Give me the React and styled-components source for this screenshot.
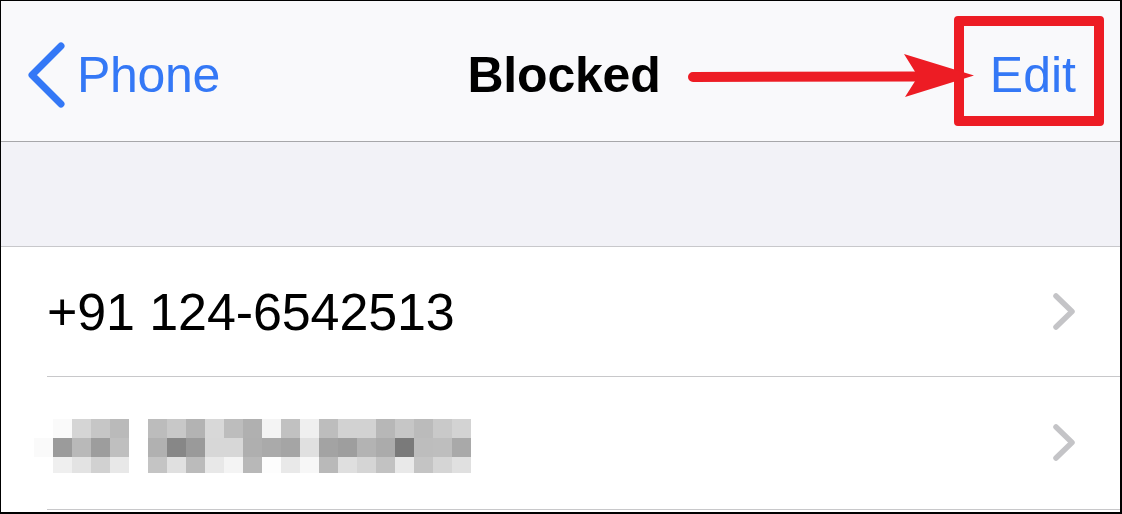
import React from "react";
import styled, { createGlobalStyle } from "styled-components";

const GlobalStyle = createGlobalStyle`
  * { box-sizing: border-box; }
  html, body { margin: 0; padding: 0; background: #ffffff; }
  body { font-family: "Liberation Sans", Arial, sans-serif; }
`;

const Frame = styled.div`
  width: 1122px;
  height: 514px;
  border-style: solid;
  border-color: #000;
  border-width: 1px 2px 2px 1px;
  background: #ffffff;
  overflow: hidden;
  display: flex;
  flex-direction: column;
`;

const NavBar = styled.header`
  position: relative;
  flex: none;
  height: 141px;
  padding-top: 7px;
  background: #f9f9fb;
  border-bottom: 1px solid #a7a7aa;
  display: grid;
  grid-template-columns: 1fr auto 1fr;
  align-items: center;
`;

const BackButton = styled.div`
  display: flex;
  align-items: center;
  gap: 11px;
  margin-left: 25px;
  color: #3478f6;
  font-size: 50px;
  letter-spacing: -0.3px;
`;

const Title = styled.h1`
  margin: 0 0 0 7px;
  font-size: 50px;
  font-weight: 700;
  letter-spacing: -0.2px;
  color: #000;
`;

const EditSlot = styled.div`
  justify-self: end;
  margin-right: 44px;
`;

const EditLabel = styled.span`
  position: relative;
  display: inline-block;
  color: #3478f6;
  font-size: 50px;

  &::after {
    content: "";
    position: absolute;
    top: -30px;
    left: -36px;
    right: -28px;
    bottom: -22px;
    border: 10px solid #ed1c24;
    border-radius: 4px;
  }
`;

const ArrowOverlay = styled.svg`
  position: absolute;
  left: 679px;
  top: 44px;
`;

const GroupGap = styled.div`
  flex: none;
  height: 105px;
  background: #f2f2f7;
  border-bottom: 1px solid #c8c8cb;
`;

const Cell = styled.div`
  flex: none;
  padding-left: 46px;
  background: #fff;
`;

const CellBody = styled.div`
  height: ${(p) => p.$h}px;
  border-bottom: 1px solid #c8c8ca;
  display: flex;
  align-items: center;
  justify-content: space-between;
  padding-right: 43px;
`;

const Number = styled.span`
  font-size: 52px;
  letter-spacing: -0.1px;
  color: #000;
`;

const Pixelated = styled.div`
  margin-left: -13px;
  margin-top: 6px;
  display: grid;
  grid-template-columns: repeat(23, 19px);
  grid-template-rows: 19px 19px 16px;
`;

const Pixel = styled.div`
  background: ${(p) => p.$c};
`;

const BackChevron = () => (
  <svg width="40" height="66" viewBox="0 0 40 66" aria-hidden="true">
    <path
      d="M35 4 L6 33 L35 62"
      fill="none"
      stroke="#3478f6"
      strokeWidth="7"
      strokeLinecap="round"
      strokeLinejoin="round"
    />
  </svg>
);

const Disclosure = () => (
  <svg width="26" height="42" viewBox="0 0 26 42" aria-hidden="true">
    <path
      d="M5 5 L21 20.5 L5 36"
      fill="none"
      stroke="#c4c4c7"
      strokeWidth="5.5"
      strokeLinecap="round"
      strokeLinejoin="round"
    />
  </svg>
);

const W = "#ffffff";
const pixelRows = [
  [W, "#fafafa", "#d5d5d5", "#c6c6c6", "#bababa", W,
    "#bcbcbc", "#c8c8c8", "#b3b3b3", "#d8d8d8", "#bdbdbd", "#b0b0b0", "#f4f4f4", "#c1c1c1", "#efefef",
    "#bdbdbd", "#d2d2d2", "#d2d2d2", "#b7b7b7", "#c6c6c6", "#bbbbbb", "#c9c9c9", "#d3d3d3"],
  ["#fafafa", "#9b9b9b", "#b9b9b9", "#9d9d9d", "#bfbfbf", W,
    "#b1b1b1", "#878787", "#9a9a9a", "#d7d7d7", "#d7d7d7", "#afafaf", "#aaaaaa", "#a5a5a5", "#e0e0e0",
    "#a3a3a3", "#9e9e9e", "#b3b3b3", "#ababab", "#7a7a7a", "#bdbdbd", "#bebebe", "#a9a9a9"],
  [W, "#efefef", "#e3e3e3", "#d1d1d1", "#e8e8e8", W,
    "#c4c4c4", "#e0e0e0", "#bbbbbb", "#e8e8e8", "#f4f4f4", "#b8b8b8", "#fdfdfd", "#e9e9e9", "#f7f7f7",
    "#b9b9b9", "#dfdfdf", "#d5d5d5", "#c2c2c2", "#e9e9e9", "#c4c4c4", "#d5d5d5", "#e0e0e0"],
];

export default function App() {
  return (
    <>
      <GlobalStyle />
      <Frame>
        <NavBar>
          <BackButton>
            <BackChevron />
            <span>Phone</span>
          </BackButton>
          <Title>Blocked</Title>
          <EditSlot>
            <EditLabel>Edit</EditLabel>
          </EditSlot>
          <ArrowOverlay width="300" height="62" viewBox="0 0 300 62" aria-hidden="true">
            <path d="M13 32 L236 31.5" stroke="#ed1c24" strokeWidth="10" strokeLinecap="round" fill="none" />
            <polygon points="224,9 294,30.5 225,52 238,31.5" fill="#ed1c24" />
          </ArrowOverlay>
        </NavBar>
        <GroupGap />
        <Cell>
          <CellBody $h={130}>
            <Number>+91 124-6542513</Number>
            <Disclosure />
          </CellBody>
        </Cell>
        <Cell>
          <CellBody $h={133}>
            <Pixelated>
              {pixelRows.flatMap((row, r) =>
                row.map((c, i) => <Pixel key={`${r}-${i}`} $c={c} />)
              )}
            </Pixelated>
            <Disclosure />
          </CellBody>
        </Cell>
      </Frame>
    </>
  );
}
